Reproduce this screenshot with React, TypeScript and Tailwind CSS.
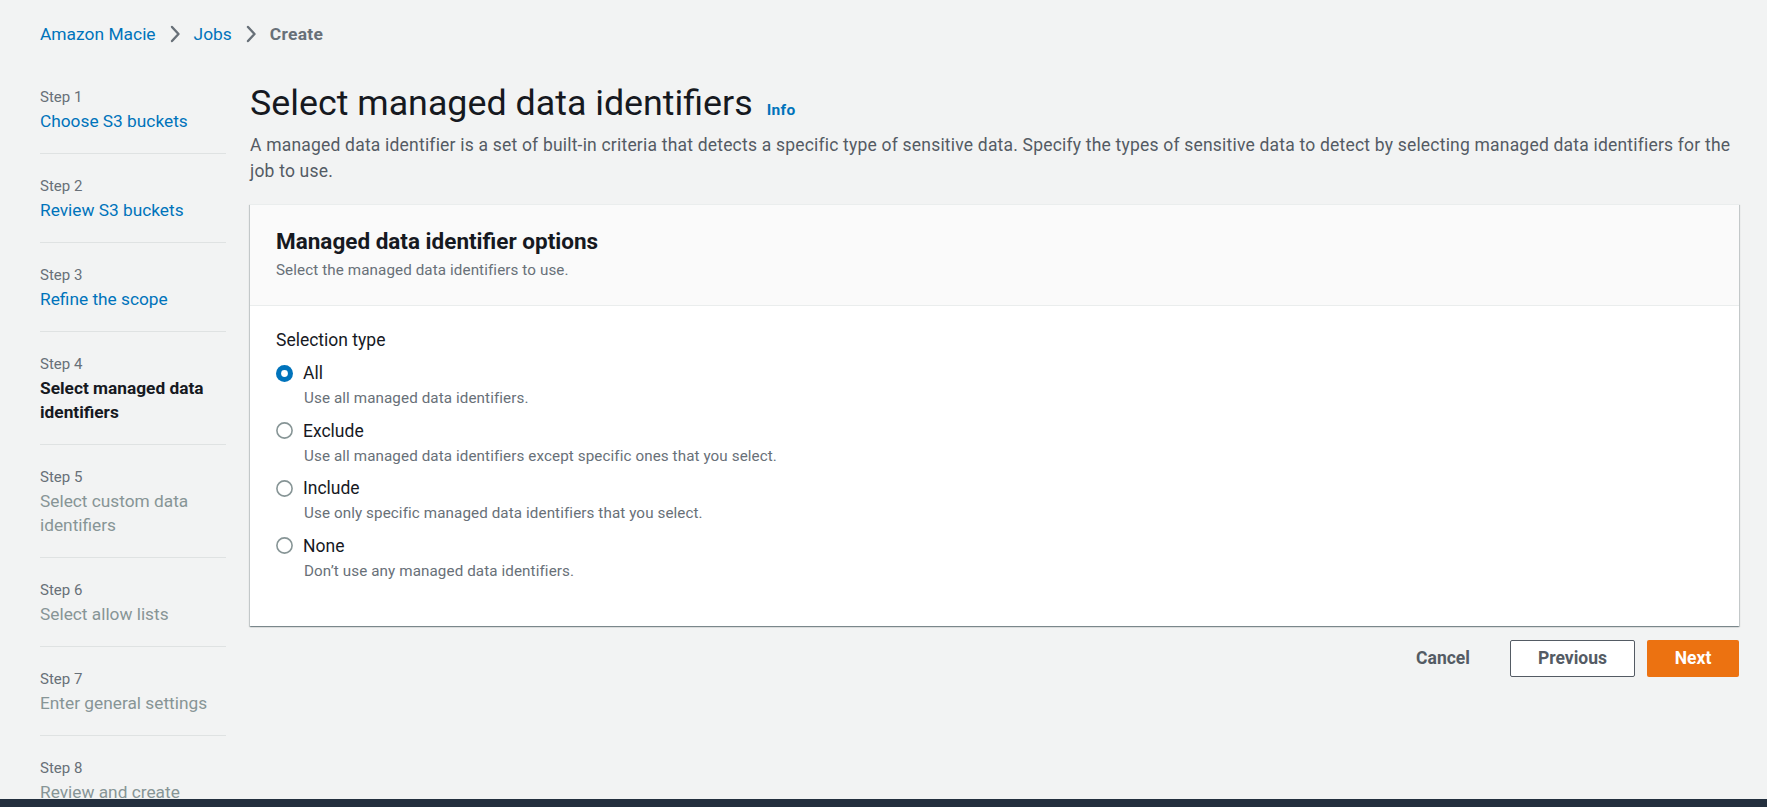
import React from "react";

const steps: { n: number; title: string; state: "link" | "current" | "disabled" }[] = [
  { n: 1, title: "Choose S3 buckets", state: "link" },
  { n: 2, title: "Review S3 buckets", state: "link" },
  { n: 3, title: "Refine the scope", state: "link" },
  { n: 4, title: "Select managed data identifiers", state: "current" },
  { n: 5, title: "Select custom data identifiers", state: "disabled" },
  { n: 6, title: "Select allow lists", state: "disabled" },
  { n: 7, title: "Enter general settings", state: "disabled" },
  { n: 8, title: "Review and create", state: "disabled" },
];

const options = [
  { label: "All", desc: "Use all managed data identifiers.", checked: true },
  { label: "Exclude", desc: "Use all managed data identifiers except specific ones that you select.", checked: false },
  { label: "Include", desc: "Use only specific managed data identifiers that you select.", checked: false },
  { label: "None", desc: "Don’t use any managed data identifiers.", checked: false },
];

function Chevron() {
  return (
    <svg width="12" height="18" viewBox="0 0 12 18" className="mx-[13px]">
      <path d="M3 2 L9.5 9 L3 16" fill="none" stroke="#687078" strokeWidth="2.4" strokeLinecap="round" strokeLinejoin="round" />
    </svg>
  );
}

function Radio({ checked }: { checked: boolean }) {
  return checked ? (
    <svg width="17" height="17" viewBox="0 0 17 17" className="shrink-0">
      <circle cx="8.5" cy="8.5" r="8.5" fill="#0073bb" />
      <circle cx="8.5" cy="8.5" r="3.4" fill="#ffffff" />
    </svg>
  ) : (
    <svg width="17" height="17" viewBox="0 0 17 17" className="shrink-0">
      <circle cx="8.5" cy="8.5" r="7.6" fill="#ffffff" stroke="#879596" strokeWidth="1.6" />
    </svg>
  );
}

export default function App() {
  return (
    <div
      className="h-screen overflow-hidden bg-[#f2f3f3] pl-[40px] pr-[28px] text-[#16191f]"
      style={{ fontFamily: "Roboto, 'Liberation Sans', sans-serif" }}
    >
      {/* Breadcrumb */}
      <div className="flex items-center pt-[22px] h-[46px] text-[17.4px] leading-[24px]">
        <span className="text-[#0073bb]">Amazon Macie</span>
        <Chevron />
        <span className="text-[#0073bb]">Jobs</span>
        <Chevron />
        <span className="text-[#687078] font-bold tracking-[0.3px]">Create</span>
      </div>

      <div className="mt-[35px] flex gap-[24px]">
        {/* Side navigation */}
        <nav className="w-[186px] shrink-0 pt-[4px]">
          {steps.map((s, i) => (
            <div
              key={s.n}
              className={
                "pt-[20px] pb-[20px] first:pt-0 " +
                (i < steps.length - 1 ? "border-b border-[#dfe2e2]" : "")
              }
            >
              <div className="text-[15px] leading-[24px] text-[#687078]">Step {s.n}</div>
              <div
                className={
                  "text-[17.3px] leading-[24px] " +
                  (s.state === "link"
                    ? "text-[#0073bb]"
                    : s.state === "current"
                    ? "text-[#16191f] font-bold"
                    : "text-[#879596]")
                }
              >
                {s.title}
              </div>
            </div>
          ))}
        </nav>

        {/* Main content */}
        <main className="flex-1 min-w-0">
          <div className="flex items-baseline">
            <h1 className="text-[35.8px] leading-[44px] font-normal text-[#16191f]">
              Select managed data identifiers
            </h1>
            <span className="ml-[14px] text-[15.5px] font-bold text-[#0073bb] tracking-[0.3px]">Info</span>
          </div>
          <p className="mt-[7px] text-[17.5px] leading-[26px] tracking-[0.2px] text-[#545b64]">
            A managed data identifier is a set of built-in criteria that detects a specific type of sensitive data. Specify the
            types of sensitive data to detect by selecting managed data identifiers for the job to use.
          </p>

          {/* Card */}
          <div className="mt-[20px] bg-white shadow-[0_1px_1px_0_rgba(0,28,36,0.3),1px_1px_1px_0_rgba(0,28,36,0.15),-1px_1px_1px_0_rgba(0,28,36,0.15)] border-t border-[#eaeded]">
            <div className="bg-[#fafafa] border-b border-[#eaeded] px-[26px] pt-[21px] pb-[24px]">
              <h2 className="text-[22.5px] leading-[30px] font-bold text-[#16191f]">Managed data identifier options</h2>
              <p className="mt-[3px] text-[15.2px] leading-[22px] tracking-[0.1px] text-[#687078]">Select the managed data identifiers to use.</p>
            </div>
            <div className="px-[26px] pt-[22px] pb-[44px]">
              <div className="text-[17.5px] leading-[24px] text-[#16191f]">Selection type</div>
              <div className="mt-[9px] flex flex-col gap-[9.5px]">
                {options.map((o) => (
                  <div key={o.label}>
                    <div className="flex items-center h-[24px]">
                      <Radio checked={o.checked} />
                      <span className="ml-[10px] text-[17.5px] leading-[24px] text-[#16191f]">{o.label}</span>
                    </div>
                    <div className="mt-[2px] pl-[28px] text-[15.2px] leading-[22px] tracking-[0.1px] text-[#687078]">{o.desc}</div>
                  </div>
                ))}
              </div>
            </div>
          </div>

          {/* Actions */}
          <div className="mt-[14px] flex justify-end items-center gap-[12px]">
            <button className="w-[110px] h-[37px] text-[17.5px] font-bold text-[#545b64]">Cancel</button>
            <button className="w-[125px] h-[37px] rounded-[2px] border border-[#545b64] bg-white text-[17.5px] font-bold text-[#545b64]">
              Previous
            </button>
            <button className="w-[92px] h-[37px] rounded-[2px] bg-[#ec7211] text-[17.5px] font-bold text-white">Next</button>
          </div>
        </main>
      </div>

      <div className="fixed left-0 right-0 bottom-0 h-[8px] bg-[#232f3e]" />
    </div>
  );
}
